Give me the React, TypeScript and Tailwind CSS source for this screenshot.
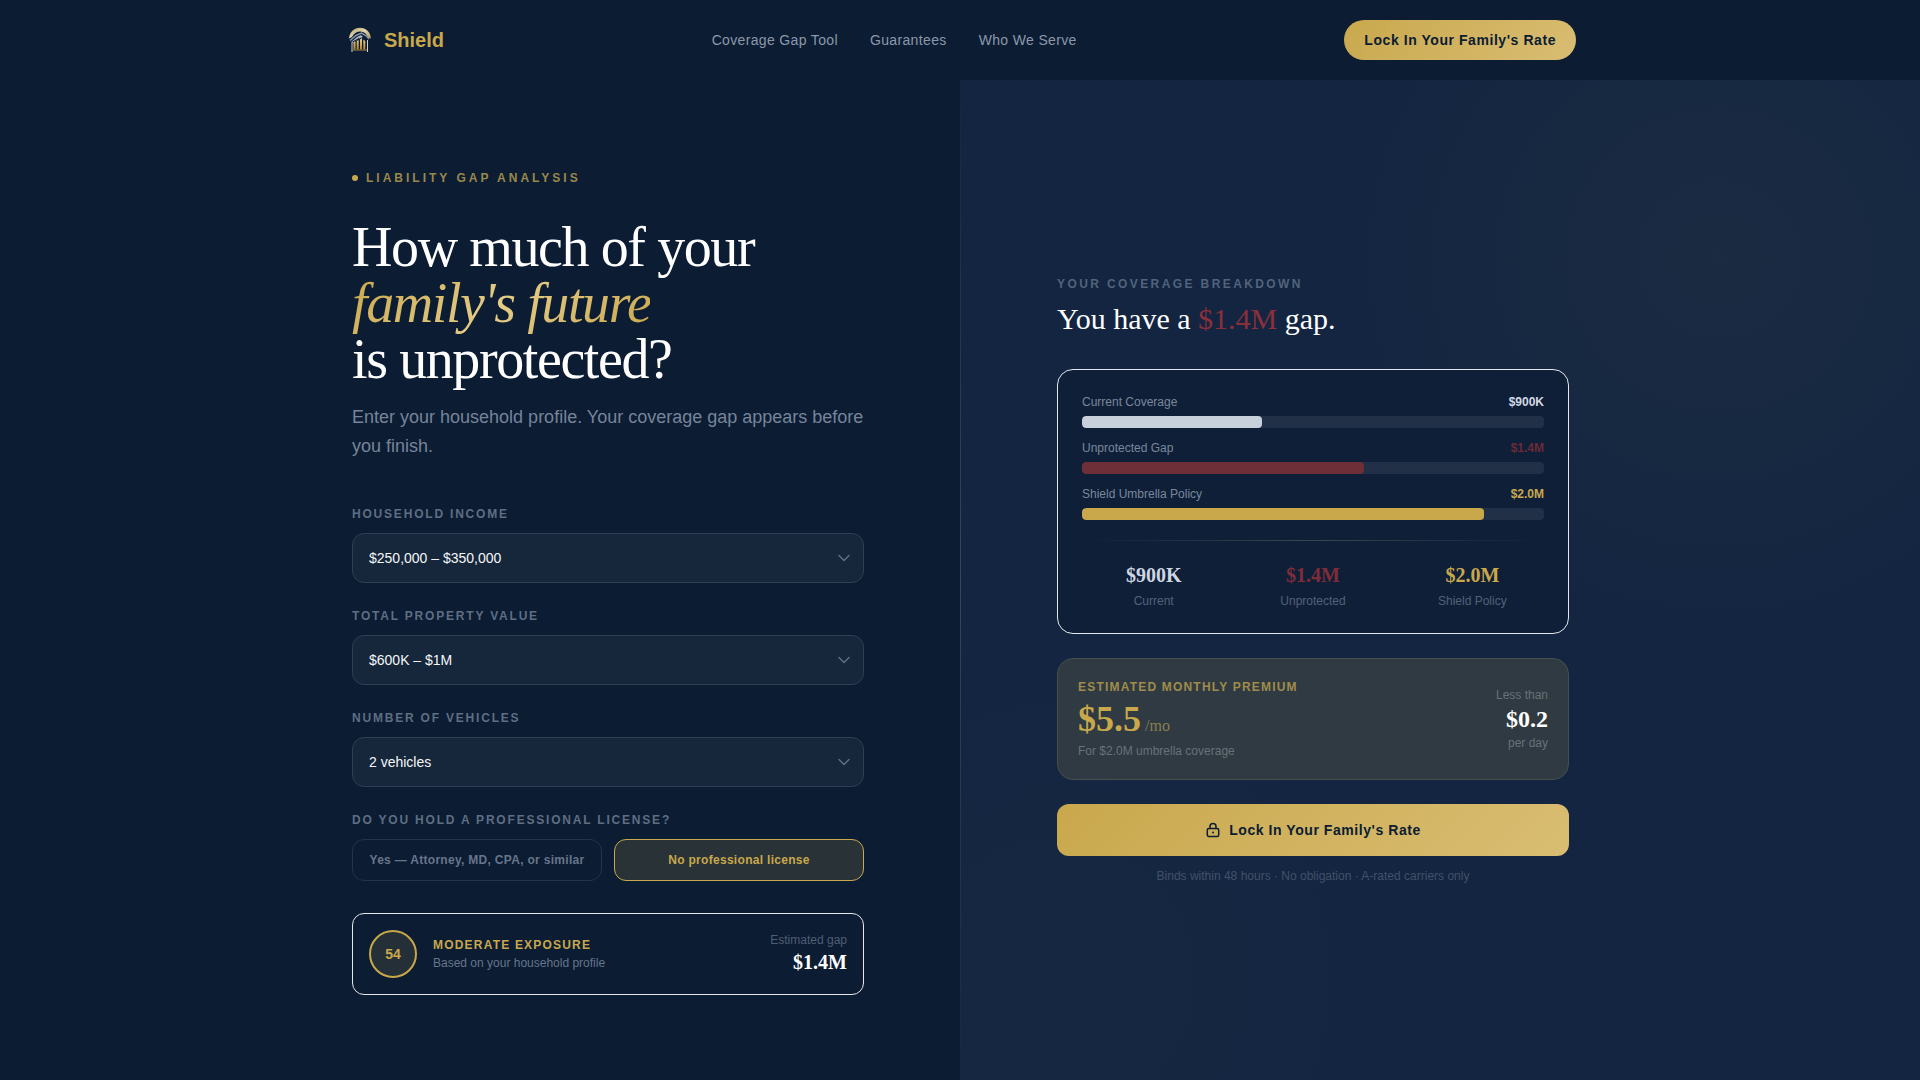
import React, { useState } from "react";
import { clsx } from "clsx";

interface ISelectField {
  id: string;
  label: string;
  value: string;
  options: string[];
}

interface ICoverageBar {
  id: number;
  label: string;
  amount: string;
  percent: number;
  barBg: string;
  textColor: string;
}

interface IStat {
  id: number;
  amount: string;
  label: string;
  textColor: string;
}

const navLinks = ["Coverage Gap Tool", "Guarantees", "Who We Serve"];

const fields: ISelectField[] = [
  {
    id: "income",
    label: "Household Income",
    value: "$250,000 – $350,000",
    options: ["$150,000 – $250,000", "$250,000 – $350,000", "$350,000 – $500,000"],
  },
  {
    id: "property",
    label: "Total Property Value",
    value: "$600K – $1M",
    options: ["$300K – $600K", "$600K – $1M", "$1M – $2M"],
  },
  {
    id: "vehicles",
    label: "Number of Vehicles",
    value: "2 vehicles",
    options: ["1 vehicle", "2 vehicles", "3 vehicles"],
  },
];

const licenseOptions = [
  "Yes — Attorney, MD, CPA, or similar",
  "No professional license",
];

const bars: ICoverageBar[] = [
  {
    id: 1,
    label: "Current Coverage",
    amount: "$900K",
    percent: 39,
    barBg: "bg-[#c8d0dc]",
    textColor: "text-[#d3dae5]",
  },
  {
    id: 2,
    label: "Unprotected Gap",
    amount: "$1.4M",
    percent: 61,
    barBg: "bg-[#6e2f38]",
    textColor: "text-[#6b2a37]",
  },
  {
    id: 3,
    label: "Shield Umbrella Policy",
    amount: "$2.0M",
    percent: 87,
    barBg: "bg-[#c9a84c]",
    textColor: "text-[#c9a84c]",
  },
];

const stats: IStat[] = [
  { id: 1, amount: "$900K", label: "Current", textColor: "text-[#ced6e1]" },
  { id: 2, amount: "$1.4M", label: "Unprotected", textColor: "text-[#7e2d38]" },
  { id: 3, amount: "$2.0M", label: "Shield Policy", textColor: "text-[#c9a84c]" },
];

const Logo: React.FC = () => (
  <svg viewBox="0 0 32 32" className="size-8" aria-hidden="true">
    <defs>
      <linearGradient id="logo-gold" x1="0" y1="0" x2="0" y2="1">
        <stop offset="0" stopColor="#f0d692" />
        <stop offset="1" stopColor="#b5852a" />
      </linearGradient>
      <linearGradient id="logo-arc" x1="0" y1="0" x2="1" y2="1">
        <stop offset="0" stopColor="#b59c5c" />
        <stop offset="0.5" stopColor="#e2d6b4" />
        <stop offset="1" stopColor="#a8935c" />
      </linearGradient>
    </defs>
    <path
      d="M5 14.500C5.500 8 10 3.700 16 3.700S26.500 8 27 14.500l-3-1C22.500 9.500 20 7.500 16.500 7.500 12.500 7.500 9.500 9.500 8 13Z"
      fill="url(#logo-arc)"
    />
    <path
      d="M6 16.500 12 11.500 17.500 9l5 3 2.500 3"
      fill="none"
      stroke="#8794a5"
      strokeWidth="1.500"
    />
    <path d="M7 18 13 13l4-2 2 2-5 2-5 4Z" fill="#aab3bd" />
    <path d="M8.500 18 15 14.500" stroke="#0b1c33" strokeWidth="1" />
    <path
      d="M9.500 18.500 11.500 17.500V25.500h-2ZM12.700 17 14.700 16v9.500h-2ZM16 15.500 18 14v11.500h-2ZM19.300 15.500 21.300 17v8.500h-2Z"
      fill="url(#logo-gold)"
    />
    <path d="M8 18.500V28M23.500 16v12" stroke="#cfd2d2" strokeWidth="1" />
    <path d="M8.500 26h14.500" stroke="#a98436" strokeWidth="1" />
  </svg>
);

const Header: React.FC = () => (
  <header className="w-full bg-[#0b1c33]">
    <div className="mx-auto flex h-20 max-w-7xl items-center justify-between px-6">
      <a href="#home" className="flex items-center gap-2 text-xl font-bold text-[#c9a84c]">
        <Logo />
        Shield
      </a>
      <nav className="flex gap-8">
        {navLinks.map((link: string) => (
          <a
            key={link}
            href="#"
            className="text-sm tracking-wide text-[#8c98aa]"
          >
            {link}
          </a>
        ))}
      </nav>
      <button
        type="button"
        className="h-10 rounded-full bg-linear-135 from-[#c9a84c] to-[#d9bd72] px-5 text-sm font-bold tracking-[0.04em] text-[#0b1c33]"
      >
        Lock In Your Family's Rate
      </button>
    </div>
  </header>
);

const SelectField: React.FC<{ field: ISelectField }> = ({ field }) => (
  <div>
    <label
      htmlFor={field.id}
      className="mb-[11px] block text-xs font-bold tracking-[0.15em] text-[#5f6e83] uppercase"
    >
      {field.label}
    </label>
    <div className="relative">
      <select
        id={field.id}
        defaultValue={field.value}
        className="block h-[50px] w-full appearance-none rounded-xl border border-[#2f3e53] bg-[#16263b] px-4 text-sm text-[#f4f6f9]"
      >
        {field.options.map((option: string) => (
          <option key={option}>{option}</option>
        ))}
      </select>
      <svg
        viewBox="0 0 12 8"
        className="pointer-events-none absolute top-[21px] right-[14px] h-2 w-3"
        fill="none"
        stroke="#5f6e83"
        strokeWidth="1.5"
        strokeLinecap="round"
        aria-hidden="true"
      >
        <path d="M1 1.500 6 6.500l5-5" />
      </svg>
    </div>
  </div>
);

const ProfileForm: React.FC = () => {
  const [license, setLicense] = useState<string>(licenseOptions[1]);

  return (
    <section className="flex flex-col items-end justify-center bg-[#0b1c33] pr-24 pl-6">
      <div className="w-full max-w-lg">
        <p className="mb-7 flex items-center gap-2 py-[5px] text-xs font-bold tracking-[0.25em] text-[#9a884a] uppercase">
          <span className="size-1.5 rounded-full bg-[#c9a84c]" />
          Liability Gap Analysis
        </p>
        <h1 className="mb-4 font-['Liberation_Serif',serif] text-[56px] leading-[56px] tracking-tight text-white">
          How much of your
          <br />
          <em className="bg-linear-135 from-[#c9a84c] via-[#e4cb86] to-[#c9a84c] bg-clip-text text-transparent">
            family's future
          </em>
          <br />
          is unprotected?
        </h1>
        <p className="mb-[45px] text-lg leading-[29px] text-[#77849a]">
          Enter your household profile. Your coverage gap appears before you
          finish.
        </p>

        <form className="flex flex-col gap-[25px]">
          {fields.map((field: ISelectField) => (
            <SelectField key={field.id} field={field} />
          ))}
          <fieldset>
            <legend className="mb-[11px] text-xs font-bold tracking-[0.15em] text-[#5f6e83] uppercase">
              Do you hold a professional license?
            </legend>
            <div className="grid grid-cols-2 gap-3">
              {licenseOptions.map((option: string) => (
                <button
                  key={option}
                  type="button"
                  aria-pressed={license === option}
                  onClick={() => setLicense(option)}
                  className={clsx(
                    "h-[42px] rounded-xl border text-xs font-bold tracking-wide",
                    license === option
                      ? "border-[#c9a84c] bg-[#283237] text-[#c9a84c]"
                      : "border-[#24344a] text-[#67758a]"
                  )}
                >
                  {option}
                </button>
              ))}
            </div>
          </fieldset>
        </form>

        <div className="mt-8 flex items-center gap-4 rounded-xl border border-[#e5e7eb] p-4">
          <div className="flex size-12 items-center justify-center rounded-full border-2 border-[#c9a84c] bg-[#242f37] text-sm font-bold text-[#c9a84c]">
            54
          </div>
          <div className="flex-1">
            <p className="text-xs font-bold tracking-widest text-[#c9a84c] uppercase">
              Moderate Exposure
            </p>
            <p className="mt-0.5 text-xs text-[#67758a]">
              Based on your household profile
            </p>
          </div>
          <div className="text-right">
            <p className="text-xs text-[#505e74]">Estimated gap</p>
            <p className="font-['Liberation_Serif',serif] text-xl font-bold text-white">
              $1.4M
            </p>
          </div>
        </div>
      </div>
    </section>
  );
};

const CoverageCard: React.FC = () => (
  <div className="rounded-2xl border border-[#e5e7eb] bg-[#0f1f38] p-6">
    <div className="flex flex-col gap-3">
      {bars.map((bar: ICoverageBar) => (
        <div key={bar.id}>
          <div className="mb-1.5 flex justify-between text-xs">
            <span className="text-[#7a879b]">{bar.label}</span>
            <span className={clsx("font-bold", bar.textColor)}>
              {bar.amount}
            </span>
          </div>
          <div className="h-3 overflow-hidden rounded-sm bg-[#212f47]">
            <div
              className={clsx("h-full rounded-sm", bar.barBg)}
              style={{ width: `${bar.percent}%` }}
            />
          </div>
        </div>
      ))}
    </div>
    <div className="my-5 h-px bg-linear-to-r from-transparent via-[#3a4650] to-transparent" />
    <div className="grid grid-cols-3 gap-4 text-center">
      {stats.map((stat: IStat) => (
        <div key={stat.id}>
          <p
            className={clsx(
              "mb-1 font-['Liberation_Serif',serif] text-xl font-bold",
              stat.textColor
            )}
          >
            {stat.amount}
          </p>
          <p className="text-xs text-[#536177]">{stat.label}</p>
        </div>
      ))}
    </div>
  </div>
);

const PremiumCard: React.FC = () => (
  <div className="mt-6 flex items-center justify-between rounded-2xl border border-[#454f4b] bg-[#2f3a42] p-5">
    <div>
      <p className="text-xs font-bold tracking-widest text-[#a08c4b] uppercase">
        Estimated Monthly Premium
      </p>
      <p className="my-1 font-['Liberation_Serif',serif] text-4xl font-bold text-[#c9a84c]">
        $5.5
        <span className="ml-1 text-base font-normal text-[#8c7f50]">/mo</span>
      </p>
      <p className="text-xs text-[#667278]">For $2.0M umbrella coverage</p>
    </div>
    <div className="text-right text-xs text-[#667278]">
      <p>Less than</p>
      <p className="font-['Liberation_Serif',serif] text-2xl font-bold text-white">
        $0.2
      </p>
      <p>per day</p>
    </div>
  </div>
);

const Breakdown: React.FC = () => (
  <section className="relative flex flex-col justify-center overflow-hidden bg-[#132541] bg-[radial-gradient(circle_at_79%_18%,rgba(201,168,76,0.045),rgba(201,168,76,0.02)_220px,transparent_380px),radial-gradient(circle_at_10%_90%,rgba(201,168,76,0.02),transparent_340px)] pr-6 pl-[97px]">
    <div className="absolute inset-y-0 left-0 w-px bg-linear-to-b from-transparent via-[#3a4658] to-transparent" />
    <div className="w-full max-w-lg">
      <p className="mb-2 text-xs font-bold tracking-[0.2em] text-[#52637c] uppercase">
        Your Coverage Breakdown
      </p>
      <h2 className="mb-8 font-['Liberation_Serif',serif] text-3xl leading-[37px] text-white">
        You have a <span className="text-[#8b2f3a]">$1.4M</span> gap.
      </h2>
      <CoverageCard />
      <PremiumCard />
      <button
        type="button"
        className="mt-6 flex h-[52px] w-full items-center justify-center gap-2 rounded-xl bg-linear-135 from-[#c9a84c] to-[#d9bd72] text-sm font-bold tracking-[0.04em] text-[#0b1c33]"
      >
        <svg
          viewBox="0 0 16 16"
          className="size-4"
          fill="none"
          stroke="currentColor"
          strokeWidth="1.5"
          strokeLinecap="round"
          aria-hidden="true"
        >
          <rect x="2.300" y="6.500" width="11.400" height="8" rx="1.500" />
          <path d="M5 6.500V4.500a3 3 0 0 1 6 0v2" />
          <circle cx="8" cy="10.500" r="1" fill="currentColor" stroke="none" />
        </svg>
        Lock In Your Family's Rate
      </button>
      <p className="mt-3 text-center text-xs text-[#42516a]">
        Binds within 48 hours · No obligation · A-rated carriers only
      </p>
    </div>
  </section>
);

const App: React.FC = () => {
  return (
    <div className="flex min-h-screen flex-col bg-[#0b1c33] font-['Liberation_Sans',Arial,sans-serif]">
      <Header />
      <main className="grid flex-1 grid-cols-2">
        <ProfileForm />
        <Breakdown />
      </main>
    </div>
  );
};

export default App;
